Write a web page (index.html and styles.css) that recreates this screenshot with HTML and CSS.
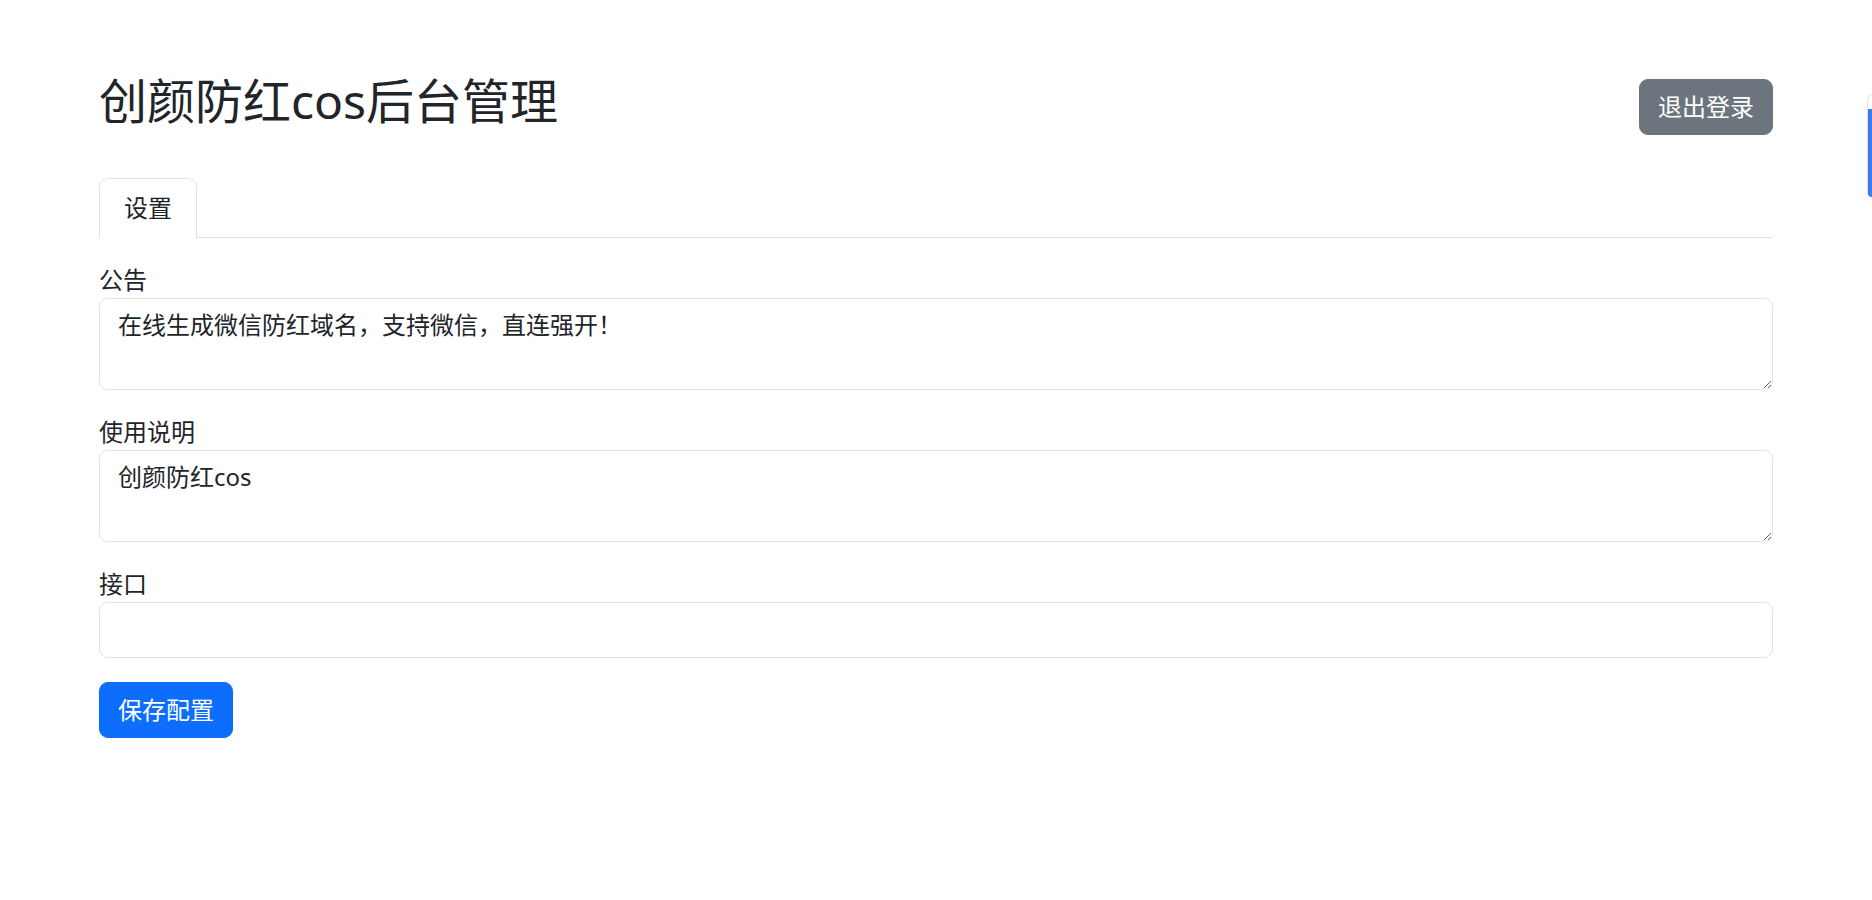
FILE: index.html
```html
<!DOCTYPE html>
<html lang="zh-CN">
<head>
<meta charset="utf-8">
<title>创颜防红cos后台管理</title>
<link rel="stylesheet" href="styles.css">
</head>
<body>
<div class="container">
  <div class="header">
    <h2 class="title">创颜防红cos后台管理</h2>
    <button class="btn btn-secondary">退出登录</button>
  </div>
  <ul class="tabs">
    <li class="tab active">设置</li>
  </ul>
  <div class="tab-content">
    <div class="field">
      <label class="label">公告</label>
      <textarea class="control area">在线生成微信防红域名，支持微信，直连强开！</textarea>
    </div>
    <div class="field">
      <label class="label">使用说明</label>
      <textarea class="control area">创颜防红cos</textarea>
    </div>
    <div class="field">
      <label class="label">接口</label>
      <input class="control input" type="text" value="">
    </div>
    <button class="btn btn-primary">保存配置</button>
  </div>
</div>
<div class="edge-widget"></div>
</body>
</html>
```

FILE: styles.css
```css
* { box-sizing: border-box; }
html, body {
  margin: 0;
  padding: 0;
  background: #fff;
}
body {
  font-family: "Noto Sans", "Noto Sans CJK SC", sans-serif;
  font-size: 24px;
  line-height: 1.5;
  color: #212529;
}
.container {
  width: 1674px;
  margin: 72px auto 0;
}
.header {
  display: flex;
  justify-content: space-between;
  align-items: center;
}
.title {
  margin: 0 0 12px;
  font-size: 48px;
  font-weight: 400;
  line-height: 1.2;
}
.btn {
  font-family: inherit;
  font-size: 24px;
  line-height: 36px;
  padding: 9px 18px;
  border: 1.5px solid transparent;
  border-radius: 9px;
  color: #fff;
  cursor: pointer;
}
.btn-secondary {
  background: #6c757d;
  border-color: #6c757d;
}
.btn-primary {
  background: #0d6efd;
  border-color: #0d6efd;
}
.tabs {
  list-style: none;
  margin: 36px 0 0;
  padding: 0;
  display: flex;
  border-bottom: 1.5px solid #dee2e6;
}
.tab {
  margin-bottom: -1.5px;
  padding: 11px 24px 12px;
  border: 1.5px solid transparent;
  border-radius: 9px 9px 0 0;
  line-height: 36px;
}
.tab.active {
  color: #212529;
  background: #fff;
  border-color: #dee2e6 #dee2e6 #fff;
}
.tab-content {
  padding-top: 24px;
}
.field {
  margin-bottom: 24px;
}
.label {
  display: block;
  line-height: 36px;
}
.control {
  display: block;
  width: 100%;
  font-family: inherit;
  font-size: 24px;
  line-height: 36px;
  color: #212529;
  padding: 8px 18px;
  border: 1.5px solid #dee2e6;
  border-radius: 9px;
  background: #fff;
  margin: 0;
}
.area {
  height: 92px;
  resize: vertical;
}
.input {
  height: 56px;
}
.edge-widget {
  position: absolute;
  top: 95px;
  right: 0;
  width: 5px;
  height: 103px;
  border-radius: 7px 0 0 7px;
  background: linear-gradient(#fff 0, #fff 13px, #3b7cf5 13px);
  border: 1px solid #e3e3e3;
  border-right: none;
}
```
